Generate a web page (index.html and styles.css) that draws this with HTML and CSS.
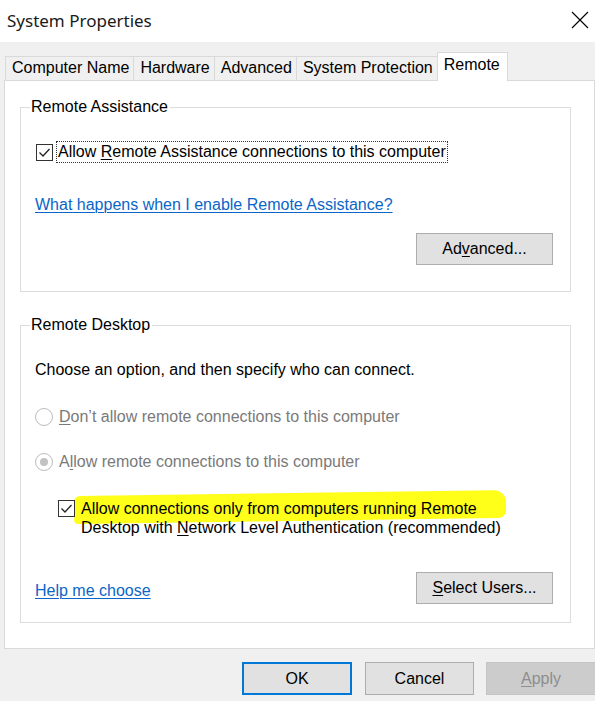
FILE: index.html
```html
<!DOCTYPE html>
<html lang="en">
<head>
     <meta charset="UTF-8">
     <title>System Properties</title>
     <link rel="stylesheet" href="styles.css">
</head>
<body>
     <div class="titlebar">
          <span class="title">System Properties</span>
          <svg class="close" width="18" height="18" viewBox="0 0 18 18">
               <path d="M1 1 L17 17 M17 1 L1 17" stroke="#000" stroke-width="1.1" fill="none"/>
          </svg>
     </div>
     <div class="tabs">
          <div class="tab">Computer Name</div>
          <div class="tab">Hardware</div>
          <div class="tab">Advanced</div>
          <div class="tab">System Protection</div>
          <div class="tab active">Remote</div>
     </div>
     <div class="panel">
          <fieldset class="group group-assist">
               <legend>Remote Assistance</legend>
               <div class="row check-row">
                    <span class="box"><svg width="15" height="15" viewBox="0 0 15 15"><path d="M2.5 7.5 L6 11 L12.5 4" stroke="#222" stroke-width="1.3" fill="none"/></svg></span>
                    <span class="label focus">Allow <u>R</u>emote Assistance connections to this computer</span>
               </div>
               <div class="row link-row"><a class="link" href="#">What happens when I enable Remote Assistance?</a></div>
               <div class="row btn-row"><button class="btn">Ad<u>v</u>anced...</button></div>
          </fieldset>
          <fieldset class="group group-desktop">
               <legend>Remote Desktop</legend>
               <div class="row intro">Choose an option, and then specify who can connect.</div>
               <div class="row radio-row radio-first">
                    <span class="radio"></span>
                    <span class="label disabled"><u>D</u>on’t allow remote connections to this computer</span>
               </div>
               <div class="row radio-row">
                    <span class="radio checked"></span>
                    <span class="label disabled">A<u>l</u>low remote connections to this computer</span>
               </div>
               <div class="row nla-row">
                    <span class="box"><svg width="15" height="15" viewBox="0 0 15 15"><path d="M2.5 7.5 L6 11 L12.5 4" stroke="#222" stroke-width="1.3" fill="none"/></svg></span>
                    <span class="label nla"><span class="marker">Allow connections only from computers running Remote</span><br>Desktop with <u>N</u>etwork Level Authentication (recommended)</span>
               </div>
               <div class="row btn-row help-row">
                    <a class="link" href="#">Help me choose</a>
                    <button class="btn"><u>S</u>elect Users...</button>
               </div>
          </fieldset>
     </div>
     <div class="footer">
          <button class="btn dlg default">OK</button>
          <button class="btn dlg">Cancel</button>
          <button class="btn dlg off"><u>A</u>pply</button>
     </div>
</body>
</html>
```

FILE: styles.css
```css
*{
     padding:0;
     margin:0;
     box-sizing: border-box;
}
html,body{
     width:595px;
     height:701px;
     overflow:hidden;
}
body{
     background:#f0f0f0;
     font-family: 'Liberation Sans', Arial, sans-serif;
     font-size:16px;
     color:#000;
}
u{text-decoration-thickness:1px; text-underline-offset:2px;}

/* title bar */
.titlebar{
     height:42px;
     background:#fff;
     display:flex;
     align-items:center;
     justify-content:space-between;
     padding:0 6px 2px 7px;
}
.title{
     font-family:'Noto Sans', sans-serif;
     font-size:17px;
     color:#1a1a1a;
}

/* tabs */
.tabs{
     display:flex;
     align-items:flex-end;
     height:28px;
     margin-top:10px;
     padding-left:5px;
     position:relative;
     z-index:1;
}
.tab{
     height:24px;
     line-height:22px;
     padding:0 4px 0 6px;
     border:1px solid #d9d9d9;
     border-bottom:none;
     margin-left:-1px;
     background:#f0f0f0;
     white-space:nowrap;
}
.tab:first-child{margin-left:0;}
.tab.active{
     height:29px;
     margin-bottom:-1px;
     background:#fff;
     line-height:24px;
     padding:0 7px 0 6px;
}

/* panel */
.panel{
     margin-left:4px;
     width:591px;
     height:569px;
     background:#fff;
     border:1px solid #d9d9d9;
     padding:17px 0 0 15px;
}
.group{
     width:551px;
     border:1px solid #dcdcdc;
     padding:0 17px 0 14px;
}
.group legend{
     line-height:18px;
     padding:0 2px 0 1px;
     margin-left:-5px;
}
.group-assist{padding-bottom:26px;}
.group-desktop{margin-top:24px; padding-bottom:18px;}

.row{display:flex; align-items:center;}
.check-row{margin-top:25px; height:22px; padding-left:1px;}
.link-row{margin-top:32px; height:20px;}
.btn-row{margin-top:18px; justify-content:flex-end;}
.help-row{margin-top:35px; justify-content:space-between;}
.help-row .link{padding-top:5px;}

.intro{margin-top:26px; height:20px;}
.radio-row{height:20px; margin-top:25px;}
.radio-first{margin-top:27px;}
.nla-row{margin-top:28px; align-items:flex-start; padding-left:23px;}

.box{
     width:17px;
     height:17px;
     border:1px solid #333;
     background:#fff;
     display:flex;
     align-items:center;
     justify-content:center;
     flex:none;
     position:relative;
     z-index:1;
}
.label{margin-left:6px; line-height:20px;}
.focus{
     outline:1px dotted #333;
     outline-offset:0;
     padding:0 1px;
     margin-left:4px;
     line-height:20px;
}
.radio{
     width:18px;
     height:18px;
     border:1px solid #bcbcbc;
     border-radius:50%;
     background:#fff;
     flex:none;
     display:flex;
     align-items:center;
     justify-content:center;
}
.radio.checked:after{
     content:"";
     width:8px;
     height:8px;
     border-radius:50%;
     background:#c2c2c2;
}
.disabled{color:#7a7a7a;}

.nla{
     line-height:19px;
     margin-top:-1px;
     position:relative;
     z-index:0;
}
.marker{position:relative;}
.marker:before{
     content:"";
     position:absolute;
     left:-7px;
     right:-29px;
     top:-7px;
     bottom:-4px;
     background:#ffff1a;
     border-radius:6px 12px 8px 4px;
     transform:rotate(-0.8deg);
     z-index:-1;
}

.link{
     color:#0a66c8;
     text-decoration:underline;
     text-decoration-thickness:1px;
     text-underline-offset:2px;
}

.btn{
     width:137px;
     height:32px;
     background:#e1e1e1;
     border:1px solid #adadad;
     font-family:inherit;
     font-size:16px;
     color:#000;
     outline:none;
}

/* footer */
.footer{
     display:flex;
     justify-content:flex-end;
     gap:12px;
     margin-top:13px;
     margin-right:-1px;
}
.btn.dlg{width:109px; height:33px;}
.btn.default{border:2px solid #0078d7; width:110px; margin-right:1px;}
.btn.off{background:#cccccc; border-color:#c4c4c4; color:#8e8e8e; width:110px;}
```
